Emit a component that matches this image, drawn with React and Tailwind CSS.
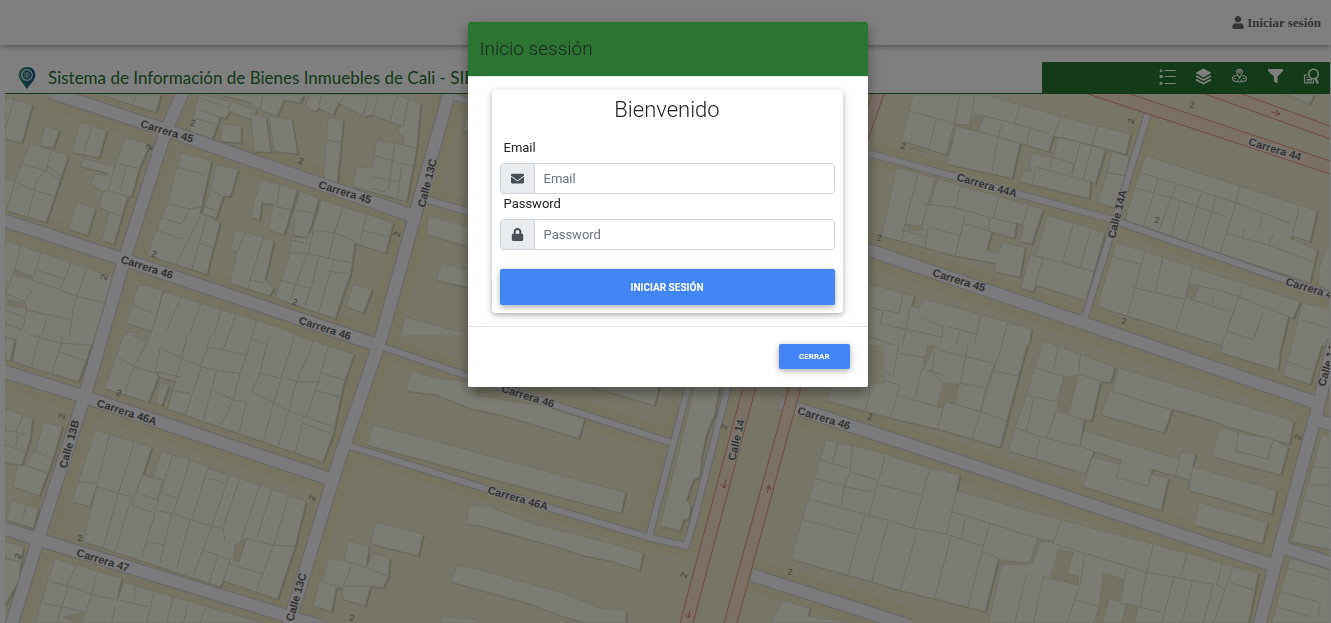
import React from "react";
import { FaEnvelope, FaLock, FaUser } from "react-icons/fa";

// Each map tile holds building outlines, parcel lines and courtyards in its own 3:1 units.
// clip is the tile's visible window: x, y, width, height.
const TILES = [
  {
    id: "nw",
    x: 0,
    y: 40,
    clip: [0, 90, 480, 245],
    buildings:
      "M15 170L98 195L65 308L15 295Z M135 257L178 272L160 323L120 318Z M240 247L320 272L297 353L215 338Z M90 310L205 347L138 548L15 510V415L45 425Z M375 292L450 312L418 385L395 470L383 470L365 530L342 612L305 602L328 515L296 503L310 455L270 432L285 402L322 408L325 400L242 380L250 355L345 380Z M230 488L287 505L262 585L206 568Z M300 162L350 180L467 217L484 162Z M598 162L690 185L770 210L757 240L690 215L675 235L660 232L636 300L568 280Z M665 253L724 257V308L662 304Z M752 220L798 232L812 336L762 335Z M808 230L876 238L893 343L822 333Z M650 162L750 187L780 210L832 227L852 180L900 190L912 162Z M930 162L915 200L945 215L955 205L1000 225L1015 190L1092 230L1118 225L1170 245L1205 258L1192 262L1198 283L1212 290L1210 315L1132 300L1115 385L1070 382L1058 440L1220 485L1250 325L1262 190L1190 165Z M985 230L1030 240L1012 428L970 415Z M543 337L635 362L605 500L600 520L618 525L660 548L620 703L440 645L470 570L502 490Z M650 373L715 390L690 470L670 468L648 535L607 520L630 455Z M785 418L892 450L852 585L805 570L820 492L785 490L778 542L752 532L762 485Z M900 453L957 475L932 560L920 595L880 585L885 540L878 528Z M965 480L1180 548L1157 640L1065 610L1052 700L1005 836L825 775L870 640L875 590L920 595L940 560Z M707 570L790 590L822 605L795 720L822 745L808 767L690 730L712 635L690 630Z M1060 732L1117 750L1090 820L1038 800Z M1285 527L1410 562V620L1280 585Z M1325 670L1410 690V745L1308 720Z M1215 830L1410 885V960L1200 890Z M1400 220L1390 275L1410 278V220Z M15 600L340 712L285 900H15Z M415 733L490 750L455 875L380 850Z M490 755L830 860L900 885V905H370L380 875L450 890L475 810Z",
    parcels:
      "M42 178L15 268 M275 260L250 345 M72 374L138 392L155 325 M138 392L185 425 M138 375L182 405 M45 425L112 455L160 467 M138 392L112 420L80 540 M45 425L20 510 M355 372L418 385 M345 380L325 450L383 470 M378 375L362 455 M310 455L325 450 M328 515L365 530 M410 165L395 200 M605 175L690 205 M595 208L660 232 M690 185L688 215 M585 235L650 255 M790 162L780 210 M965 162L955 205 M1040 165L1015 190 M1105 165L1090 225 M1135 165L1118 225 M1190 170L1170 245 M1225 180L1210 258 M1185 310L1165 450 M1118 345L1240 380 M1205 380L1192 475 M1115 410L1195 425 M1250 325L1210 315 M1112 445L1155 455 M978 300L1027 308 M527 380L615 405 M502 490L570 507L605 500 M485 533L545 552L570 507 M620 530L600 600L575 690 M600 530L530 668 M470 570L545 597 M600 610L645 625 M633 450L670 470 M615 500L655 515 M840 435L830 500L875 510 M890 510L938 518 M1030 500L1003 580L985 655 M1100 525L1080 600 M1085 570L1165 590 M940 570L1005 580L1065 605 M870 600L925 610 M940 570L925 640 M870 638L925 640L985 655L1060 670 M920 645L870 780 M955 655L940 720L915 800 M1000 665L955 820 M985 695L1045 700 M840 720L930 745 M735 578L712 635 M792 590L750 720L795 730 M750 720L745 745 M62 617L45 690L95 710 M122 640L98 720L180 750L235 770L320 790 M212 670L180 750 M258 690L220 800L207 900 M110 690L200 720 M45 690L15 760L75 785L95 750 M75 785L80 810L70 860 M80 810L215 840 M140 830L125 900 M15 810L70 830 M15 850L70 870 M397 795L460 820 M545 770L500 870 M605 785L570 880 M665 805L640 890 M710 822L680 900 M770 840L755 900",
    courts: "M45 690L95 707L95 718L43 705Z M25 780L75 788L78 805L22 795Z",
  },
  {
    id: "sw",
    x: 0,
    y: 330,
    clip: [0, 335, 475, 300],
    buildings:
      "M15 0H300L275 45L235 155L38 95L50 30L15 20Z M15 20L45 30L30 92L15 88Z M375 5L440 38L455 0H840L1062 73L1030 165L1000 310L968 397L502 237L525 155L512 150L480 142L470 125L475 140L445 217L315 175L350 75Z M480 157L508 165L485 227L467 220Z M15 235L98 265L90 330L65 405L15 398Z M132 275L187 290L160 385L118 497L38 470L52 405L75 408L110 350Z M35 510L75 525L115 535L100 595L20 570Z M285 300L455 352L428 435L457 445L485 365L570 390L690 435L780 465L918 515L885 650L832 808L670 752L660 770L250 635L290 470L270 530L215 515L235 455Z M165 685L365 745L350 815L372 757L690 850L790 879H105Z M15 635L70 650L55 755L15 825Z M1235 122L1300 142L1440 160V245L1370 220L1310 195L1217 183Z M1118 283L1440 370V437L1102 345Z M1128 577L1270 613L1255 677L1112 642Z M1045 632L1108 648L1098 712L1120 670L1170 685L1165 740L1148 775L1112 768L1095 828L1030 808L1028 775L1008 775L995 845L940 828L955 758L967 755L985 685L1032 692Z M1410 525L1440 532V595L1397 578Z M1370 705L1440 720V782L1353 755Z M1325 858L1440 870V879H1322Z",
    parcels:
      "M85 0L70 10L188 40L272 45 M188 0L185 40L175 70L155 130 M175 65L255 92 M120 15L95 105 M350 78L400 110L375 185 M440 40L400 110L470 130 M480 55L465 125L540 140 M485 55L545 85L605 110 M545 85L502 235 M560 20L545 85 M625 50L600 110L650 122L610 270 M605 110L555 255 M640 0L620 50L740 75L720 130L650 122 M690 0L670 60 M760 0L740 75 M760 30L805 45 M810 0L780 130L755 185 M720 130L700 210L660 290 M780 130L840 145 M740 215L718 305 M885 15L820 220L790 335 M840 140L890 155L960 155 M940 35L890 155L835 350 M985 50L955 155 M965 130L1035 150 M755 185L825 220L870 245L1000 290 M910 275L885 370 M910 280L995 312 M955 155L920 260 M640 180L700 210L740 215 M505 180L570 190 M945 180L1030 205 M70 255L48 305L15 300 M48 305L85 318 M52 310L48 350 M15 345L75 365 M100 360L160 388 M75 405L145 430 M80 525L65 575 M330 308L290 470 M402 340L355 490L310 650 M235 455L285 460 M290 470L355 490L395 500L345 665 M428 435L395 525L465 550L425 680 M410 487L470 510L490 450 M485 490L535 505 M518 375L465 540L515 550L480 700 M570 390L520 550L570 570L530 715 M625 412L575 570L635 590L580 735 M625 445L680 460 M625 415L688 435L635 590L670 595L675 635 M720 445L670 590 M780 465L720 640 M740 625L815 645L885 650 M815 480L770 625 M865 500L825 635L770 780 M680 700L785 730 M670 752L690 690L610 660 M440 635L490 645 M740 625L715 700 M705 645L700 695 M655 675L625 765 M428 435L490 450 M230 705L200 765L280 795L345 808 M290 730L275 795L245 879 M150 755L205 768L185 830L170 879 M130 820L185 830L250 845 M360 812L445 830 M405 768V805 M462 785L440 879 M520 800L500 879 M565 820L550 879 M615 835L600 879 M345 830L335 879 M15 685L60 695 M1032 692L1098 712L1165 740 M1055 705L1030 770L1112 768 M967 755L1028 775",
    courts: "M708 645L738 625L715 695L702 692Z M250 848L240 879H235L190 862Z",
  },
  {
    id: "s",
    x: 470,
    y: 380,
    clip: [475, 384, 410, 250],
    buildings:
      "M0 50L50 50L145 68L210 75L343 117L327 175L160 125L90 105L0 85Z M290 0H572L553 77Z M0 212L467 338L453 400L0 280Z M10 375L60 380L200 435L320 463L520 518L508 571L420 542L340 527L240 495L110 460L40 440L0 430V380Z M0 562L120 595L270 635L390 685L468 690V729H350L280 710L180 672L0 622Z M680 0H752L735 100L710 160L695 230L690 290L670 300L650 360L663 378L655 420L640 418L630 453L570 437Z M1068 178L1104 188L1148 196L1247 224L1320 245V642L1205 605L1130 585L962 537Z M935 660L1020 685L1013 708L1150 729H905Z M1090 0H1320V130L1070 62Z",
    parcels:
      "M1104 188L1088 247 M1148 196L1140 275L1123 320L1113 380 M1052 240L1138 265 M1035 295L1123 320L1210 337 M1140 275L1220 300 M1247 224L1196 408L1185 402L1015 357 M1220 313L1320 340 M1185 402L1133 585 M1000 420L1165 463 M1196 408L1255 420L1320 443 M1255 420L1205 605 M1320 535L1293 630 M1205 0L1187 92 M1205 0L1290 15L1257 110 M1283 42L1320 55",
    courts: "",
  },
  {
    id: "ne",
    x: 860,
    y: 60,
    clip: [860, 90, 480, 255],
    buildings:
      "M160 102H370L605 170L812 222L797 283L705 258L600 232L580 228L565 275L480 250L457 355L258 312L280 240L258 285L125 242Z M595 232L737 268L705 373L693 362L688 417L480 365L487 332L515 335L508 312L515 280L580 292Z M757 275L808 290L797 345L762 443L712 428L740 345Z M110 322L550 447L515 553L480 543L490 500L470 490L463 535L395 515L380 570L415 585L425 545L495 563L480 652L402 635L408 610L285 588L65 528Z M562 465L735 518L677 722L527 675L520 695L482 685L510 583L527 588Z M857 287L1372 453L1350 545L1297 527L1290 535L1372 570L1350 668L1080 580L795 480L825 380Z M768 547L1320 725L1300 775L1285 770L1262 870H1090L1085 857L712 740Z M1328 728L1410 748V830L1395 870H1290Z M1400 560L1378 625L1375 675L1410 690V560Z M1275 102H1362L1350 132Z M24 672L163 708L155 738L175 745L195 717L515 807L505 870H24Z M550 843L640 870H540Z",
    parcels:
      "M148 153L283 190L300 102 M228 180L205 275 M330 192L345 102 M340 160L480 195L565 220 M480 135L463 190 M605 170L580 228 M712 197L697 255 M425 190L415 230L395 338 M290 197L415 230L478 250 M508 207L500 255 M370 170L355 215 M150 262L205 280 M660 252L635 345 M695 260L670 355 M580 292L642 312L635 345 M575 295L570 325 M530 322L690 365 M525 335L518 372 M740 338L795 347 M175 340L135 490L125 540 M230 350L185 497 M305 365L285 443L190 430 M285 443L400 475L490 495 M415 413L400 475 M318 460L285 588 M310 490L395 515 M205 500L300 527 M505 437L485 500 M205 500L195 560 M125 510L200 530 M390 475L385 510 M640 492L607 607 M692 510L660 625 M527 588L550 592L703 635 M550 592L525 675 M840 338L930 365L1120 425L1290 490 M1140 375L1120 455L1080 580 M830 385L925 410L1100 470 M895 355L850 500 M947 378L895 515 M1025 395L980 540 M1068 410L1025 560 M1318 440L1297 527 M1205 465L1200 510 M1100 520L1225 555L1360 605 M1155 505L1145 535 M1240 520L1225 560 M960 430L935 525 M758 590L845 613 M855 573L803 765 M908 592L885 697L817 682 M998 618L975 718L885 697 M975 718L947 812 M985 672L1080 690L1135 710L1285 770 M1150 675L1100 812L1180 840 M1210 755L1180 838 M1000 720L1110 755 M1060 705L1055 740 M1100 812L1085 857 M1325 780L1400 803 M130 700L115 760L70 750L60 790L145 810L240 830 M150 745L125 870 M24 740L70 752 M175 770L250 800 M250 798L240 870 M362 765L340 870 M443 788L420 870 M24 830L120 860 M265 800L350 822 M300 810L285 870",
    courts:
      "M283 192L330 195L345 165L368 170L355 215L290 198L262 290L258 285Z M205 430L225 350L235 352L212 430Z M135 492L185 499L190 510L150 512Z M985 675L1015 682L1000 720L978 715Z",
  },
  {
    id: "se",
    x: 860,
    y: 340,
    clip: [885, 345, 455, 290],
    buildings:
      "M0 0H505L420 322L235 268L0 212Z M550 3L765 80L752 127L722 125L695 242L672 240L660 318L702 335L677 402L445 332L465 262L500 160L525 80Z M775 83L1302 243L1287 313L1110 262L1050 240L937 208L912 278L722 225L748 153L757 155Z M1080 262L1135 278L1240 298L1285 322L1262 405L1055 350Z M672 272L958 358L962 335L1007 342L998 380L1250 452L1235 522L985 450L990 420L945 408L875 388L875 403L925 415L903 512L668 440L697 350L780 372L785 360L702 335L660 318Z M1018 487L1223 548L1207 610L1000 555Z M0 320L75 342L210 385L300 403L290 452L605 540L880 612L1195 700L1165 849H385L425 675L415 658L375 815L0 720Z M1030 0H1265L1255 90L1080 38L1090 15Z M1300 0H1390L1350 133L1268 107Z M1385 283L1410 290V628L1295 605Z M1290 655L1410 690V849H1235Z",
    parcels:
      "M120 0L100 105L0 75 M120 40L205 55 M20 105L120 135L92 230 M40 110L15 212 M110 165L250 205L232 268 M185 85L165 175 M185 85L250 105 M225 35L215 95L245 127 M325 0L318 50L405 70L378 143L362 215L335 302 M318 50L300 130L378 143 M432 0L400 92L478 108 M258 185L362 215L442 242 M400 92L362 215 M235 30L318 50 M595 18L580 90 M525 82L612 110 M662 38L655 100L722 125 M485 163L588 185L612 112 M520 175L500 275 M588 215L560 295 M625 222L672 240 M465 262L540 290L525 357 M540 290L660 320 M757 155L930 208 M1135 278L1127 333L1223 357L1240 298 M785 362L768 412L865 438L875 390 M958 358L945 412 M998 380L985 450 M75 342L50 430L22 530 M0 408L48 420 M50 432L182 465 M0 450L45 457 M210 385L160 565 M290 452L258 585 M10 520L85 540L160 565L258 582L368 618 M85 545L35 725 M172 570L122 750 M272 595L222 780 M390 550L365 635L415 655 M318 530L302 598 M275 515L385 548L532 595 M605 540L578 610L860 697L1060 733 M880 612L860 697L840 800 M365 635L322 805 M980 640L965 705 M1088 665L1070 733L1095 750 M1120 680L1095 750L1060 849 M945 702L905 849 M998 718L965 849 M1060 733L1030 849 M675 645L660 735L620 849 M550 710L655 735 M500 700L465 849 M550 710L520 849 M730 700L720 800L700 849 M800 685L780 790L900 815 M645 780L720 800 M1110 728L1180 750 M1280 65L1355 90 M1355 378L1410 385 M1350 435H1410 M1335 480L1410 500 M1315 543L1410 565 M1285 685L1405 718 M1268 755L1385 790 M1250 800L1350 830 M1380 795L1375 830",
    courts:
      "M250 130L298 133L285 190L258 185L250 205L232 195Z M612 112L655 105L625 222L590 215Z M532 595L578 603L540 610L515 672L422 674L415 658L510 670Z M595 630L640 637L622 700L655 708L655 735L572 710Z M730 700L790 717L775 785L748 775L728 849H710Z M800 790L835 800L825 849H785Z M205 0H235L190 85Z",
  },
];

const WIDE_ROADS =
  "M50 92L166 130L283 171L413 216 M184 90L166 130L125 257L85 395L40 533L10 630 M450 90L414 219L382 335L338 463L287 630 M0 219L125 260L377 345 M0 370L85 397L333 480 M0 527L40 540L320 626 M860 247L1133 340L1317 403 M780 403L910 445L1272 565 M1334 340L1318 407L1282 540L1258 630 M752 575L910 626 M1284 548L1334 564 M1318 420L1334 426";
const NARROW_ROADS =
  "M425 199L480 215 M452 96L480 105 M377 345L503 388L672 443 M340 443L480 487L647 537L686 546L693 523L728 387 M649 537L690 380 M1148 113L1113 227L1085 317 M860 151L1110 219L1334 297";
const AVENUES =
  "M743 387L680 623H693L756 387Z M789 387L724 623H737L801 387Z M872 94L868 107V140L884 94Z M1088 94L1330 174V161L1130 94Z M1205 94L1330 139V126L1242 94Z";
const AVENUE_EDGES =
  "M743 387L680 623 M693 623L756 387 M789 387L724 623 M737 623L801 387 M872 94L868 107 M868 140L884 94 M1088 94L1330 174 M1330 161L1130 94 M1205 94L1330 139 M1330 126L1242 94";
const ARROWS =
  "M726 480L724 488 M721 484L724 488L727 485 M690 610L688 618 M685 614L688 618L691 615 M767 493L769 486 M766 489L769 485L771 490 M1271 112L1280 114 M1276 110L1280 114L1275 116";

const STREETS = [
  ["Carrera 45", 167, 131, 17],
  ["Carrera 45", 345, 192, 17],
  ["Carrera 46", 147, 267, 18],
  ["Carrera 46", 325, 328, 18],
  ["Calle 13C", 427, 183, -76],
  ["Carrera 46A", 127, 412, 18],
  ["Calle 13B", 69, 444, -75],
  ["Carrera 47", 103, 560, 17],
  ["Calle 13C", 296, 597, -74],
  ["Carrera 46", 528, 396, 17],
  ["Carrera 46A", 518, 498, 16],
  ["Calle 14", 736, 440, -77],
  ["Carrera 46", 824, 418, 17],
  ["Carrera 44", 1275, 149, 17],
  ["Carrera 44A", 987, 185, 16],
  ["Calle 14A", 1117, 214, -76],
  ["Carrera 45", 959, 280, 17],
  ["Carrera 44A", 1316, 290, 17],
  ["Calle 14B", 1328, 362, -74],
];

const TWOS = [
  [193, 123, 15], [149, 147, -65], [301, 161, 15], [154, 254, 15], [104, 277, -70],
  [295, 302, 15], [397, 234, -70], [119, 393, 15], [62, 416, -70], [18, 556, -70],
  [80, 538, 0], [312, 498, -65], [352, 618, 15], [724, 427, -70], [870, 417, 15],
  [684, 575, -70], [790, 572, 10], [1192, 105, 10], [1131, 121, -75], [903, 146, 5],
  [1157, 220, 5], [879, 238, 5], [1124, 321, 10], [1298, 437, -70],
];

function CityMap() {
  return (
    <svg
      className="block h-full w-full"
      viewBox="5 94 1325 529"
      preserveAspectRatio="xMinYMin slice"
      role="img"
      aria-label="Mapa de Cali"
    >
      <defs>
        {TILES.map(({ id, clip: [x, y, w, h] }) => (
          <clipPath key={id} id={`tile-${id}`}>
            <rect x={x} y={y} width={w} height={h} />
          </clipPath>
        ))}
      </defs>
      <rect x="0" y="90" width="1340" height="540" fill="#f1ecd0" />
      <g fill="none" stroke="#ece7bd" strokeWidth="34" strokeLinejoin="round" opacity=".55">
        <path d={WIDE_ROADS} />
        <path d={NARROW_ROADS} strokeWidth="24" />
      </g>
      {TILES.map((t) => (
        <g key={t.id} clipPath={`url(#tile-${t.id})`}>
          <g transform={`translate(${t.x} ${t.y}) scale(.33333)`}>
            <path d={t.buildings} fill="#d0ccb0" transform="translate(5 4)" />
            <path d={t.buildings} fill="#f7f8e7" stroke="#d9d6bf" strokeWidth="2" />
            <path d={t.parcels} fill="none" stroke="#dcd9c6" strokeWidth="3" />
            <path d={t.courts} fill="#ece7c8" stroke="#d9d6bf" strokeWidth="2" />
          </g>
        </g>
      ))}
      <g fill="none" strokeLinejoin="round">
        <g stroke="#d0cecd">
          <path d={WIDE_ROADS} strokeWidth="14" />
          <path d={NARROW_ROADS} strokeWidth="8" />
        </g>
        <g stroke="#f6f5f9">
          <path d={WIDE_ROADS} strokeWidth="12" />
          <path d={NARROW_ROADS} strokeWidth="6" />
        </g>
      </g>
      <path d={AVENUES} fill="#f8e2ce" />
      <path d={AVENUE_EDGES} fill="none" stroke="#e5957f" strokeWidth="1" />
      <path d={ARROWS} fill="none" stroke="#dd7f6b" strokeWidth="1" />
      <g
        textAnchor="middle"
        dominantBaseline="central"
        className="font-['Liberation_Sans',Arial,sans-serif]"
      >
        {TWOS.map(([x, y, r]) => (
          <text key={`${x}-${y}`} transform={`translate(${x} ${y}) rotate(${r})`} fontSize="9" fill="#86847a">
            2
          </text>
        ))}
        {STREETS.map(([name, x, y, r]) => (
          <text
            key={`${name}-${x}`}
            transform={`translate(${x} ${y}) rotate(${r})`}
            fontSize="11"
            fontWeight="700"
            fill="#69696b"
            stroke="#f6f5f2"
            strokeWidth="2"
            paintOrder="stroke"
          >
            {name}
          </text>
        ))}
      </g>
    </svg>
  );
}

function PinLogo() {
  return (
    <svg className="h-6 w-[18px]" viewBox="0 0 18 24" aria-hidden="true">
      <defs>
        <linearGradient id="pin" x1="0" y1="0" x2="1" y2="0">
          <stop offset="0" stopColor="#3f9a78" />
          <stop offset=".55" stopColor="#236f83" />
          <stop offset="1" stopColor="#0d4c88" />
        </linearGradient>
      </defs>
      <path d="M9 1C4.200 1 .7 4.500.7 9.200c0 5 5.300 8.600 8.300 14 3-5.400 8.300-9 8.300-14C17.300 4.500 13.800 1 9 1z" fill="url(#pin)" />
      <circle cx="9" cy="9" r="5.300" fill="none" stroke="#d5e6e6" strokeWidth="1.300" />
      <circle cx="9" cy="9" r="2.600" fill="none" stroke="#8fbcc6" strokeWidth=".8" />
      <path d="M8 7.500h1.500a.8.800 0 010 1.500H8zm0 1.500h1.700a.8.800 0 010 1.600H8z" fill="none" stroke="#b5d4dc" strokeWidth=".6" />
    </svg>
  );
}

const TOOLS = [
  {
    label: "Leyenda",
    icon: (
      <>
        <path d="M5.500 2.500H16.500M5.500 8.500H16.500M5.500 15.500H16.500" fill="none" stroke="currentColor" strokeWidth="1.200" />
        <path d="M2 .8L3.700 3.700H.3zM.6 7h3v3h-3z" fill="currentColor" />
        <circle cx="2" cy="15.300" r="1.500" fill="currentColor" />
      </>
    ),
  },
  {
    label: "Capas",
    icon: (
      <>
        <path d="M8.500.5L16.500 5L8.500 9.500L.5 5z" fill="currentColor" />
        <path d="M1 8L8.500 12L16 8M1 11.500L8.500 15.500L16 11.500" fill="none" stroke="currentColor" strokeWidth="1.700" />
      </>
    ),
  },
  {
    label: "Ubicación",
    icon: (
      <g fill="none" stroke="currentColor" strokeWidth="1.200">
        <path d="M5.500 7.500C3 8 1.500 9 1.500 10.500c0 2 3 3.500 7 3.500s7-1.500 7-3.500c0-1.500-1.500-2.500-4-3" />
        <path d="M8.500 9.800C7 7.500 5.700 6 5.700 4.200a2.800 2.800 0 015.600 0C11.300 6 10 7.500 8.500 9.800z" />
        <circle cx="8.500" cy="4.200" r=".8" />
        <path d="M3 10.500h2M12 10.500h2M6.500 11.500v1.500M10.500 11.500v1.500" />
      </g>
    ),
  },
  {
    label: "Filtro",
    icon: <path d="M1 1H16V3L10.500 8.500V15.500L7 13.500V8.500L1 3z" fill="currentColor" />,
  },
  {
    label: "Consulta",
    icon: (
      <g fill="none" stroke="currentColor">
        <circle cx="10.500" cy="6" r="4.700" strokeWidth="1.600" />
        <path d="M12.500 10.500L15 15.500" strokeWidth="2.200" />
        <path d="M4.500 7H1.500V14.800H10.500V12M3.500 9.500H5M3.500 11.500H9M3.500 13H9" strokeWidth="1.200" />
      </g>
    ),
  },
];

function Field({ id, type, label, Icon }) {
  return (
    <div>
      <label htmlFor={id} className="block pl-1 text-[13px] leading-5">
        {label}
      </label>
      <div className="mt-[5px] flex h-[31px] overflow-hidden rounded border border-[#ced4da] focus-within:border-[#4285f4]">
        <span className="flex items-center border-r border-[#ced4da] bg-[#e9ecef] px-2.5 text-[#495057]">
          <Icon className="h-[13px] w-auto" />
        </span>
        <input
          id={id}
          type={type}
          placeholder={label}
          className="min-w-0 flex-1 bg-white px-[9px] text-[13px] text-[#495057] outline-none placeholder:text-[#6c757d]"
        />
      </div>
    </div>
  );
}

export default function App() {
  return (
    <div className="flex h-screen flex-col overflow-hidden bg-white font-[Roboto,sans-serif] text-[#212529]">
      <nav className="relative flex h-[45px] shrink-0 items-center justify-end px-2.5 shadow-[0_2px_5px_rgba(0,0,0,0.3)]">
        <a
          href="#login"
          className="flex items-center gap-[3px] font-['Liberation_Serif','Times_New_Roman',serif] text-[13px] font-bold text-[#6b6b6b]"
        >
          <FaUser className="h-[13px] w-3" />
          Iniciar sesión
        </a>
      </nav>

      <header className="mr-px ml-[5px] mt-[17px] flex h-8 shrink-0 items-stretch justify-between border-b border-[#2b7533]">
        <div className="flex items-center gap-3 pl-[13px]">
          <PinLogo />
          <h1 className="whitespace-nowrap font-[Lato,sans-serif] text-[17px] font-normal text-[#2b7533]">
            Sistema de Información de Bienes Inmuebles de Cali - SIBICA
          </h1>
        </div>
        <div className="flex w-72 items-center justify-end gap-[19px] bg-[#2b7533] pr-2.5 pb-[3px] text-white">
          {TOOLS.map((t) => (
            <button key={t.label} type="button" aria-label={t.label}>
              <svg className="block size-[17px]" viewBox="0 0 17 17" aria-hidden="true">
                {t.icon}
              </svg>
            </button>
          ))}
        </div>
      </header>

      <main className="mr-px ml-[5px] min-h-0 flex-1">
        <CityMap />
      </main>

      <div className="fixed inset-0 flex items-start justify-center overflow-auto bg-black/50 py-[22px] pr-4 pl-5">
        <section
          role="dialog"
          aria-modal="true"
          aria-labelledby="login-title"
          className="w-full max-w-[400px] rounded-[2px] bg-white shadow-[0_5px_11px_rgba(0,0,0,0.25),0_4px_15px_rgba(0,0,0,0.2)]"
        >
          <div className="rounded-t-[2px] border-b border-[#dee2e6] bg-[#2b7533] px-3 py-3">
            <h2 id="login-title" className="text-[19px] leading-[30px] font-light">
              Inicio sessión
            </h2>
          </div>

          <div className="py-[13px] pr-[25px] pl-6">
            <form
              onSubmit={(e) => e.preventDefault()}
              className="rounded px-2 pb-2 shadow-[0_2px_5px_rgba(0,0,0,0.2),0_2px_10px_rgba(0,0,0,0.14)]"
            >
              <h3 className="pt-1 text-center text-[22px] leading-8 font-light">Bienvenido</h3>
              <div className="mt-3">
                <Field id="email" type="email" label="Email" Icon={FaEnvelope} />
                <Field id="password" type="password" label="Password" Icon={FaLock} />
              </div>
              <button
                type="submit"
                className="mt-[19px] block h-9 w-full rounded-[2px] bg-[#4285f4] text-[10px] font-bold text-white uppercase shadow-[0_2px_5px_rgba(0,0,0,0.2),0_2px_10px_rgba(0,0,0,0.14)]"
              >
                Iniciar sesión
              </button>
            </form>
          </div>

          <div className="flex justify-end border-t border-[#dee2e6] px-[18px] pt-[17px] pb-[18px]">
            <button
              type="button"
              className="h-[25px] rounded-[2px] bg-[#4285f4] px-5 text-[8px] font-bold text-white uppercase shadow-[0_2px_5px_rgba(0,0,0,0.2),0_2px_10px_rgba(0,0,0,0.14)]"
            >
              Cerrar
            </button>
          </div>
        </section>
      </div>
    </div>
  );
}
